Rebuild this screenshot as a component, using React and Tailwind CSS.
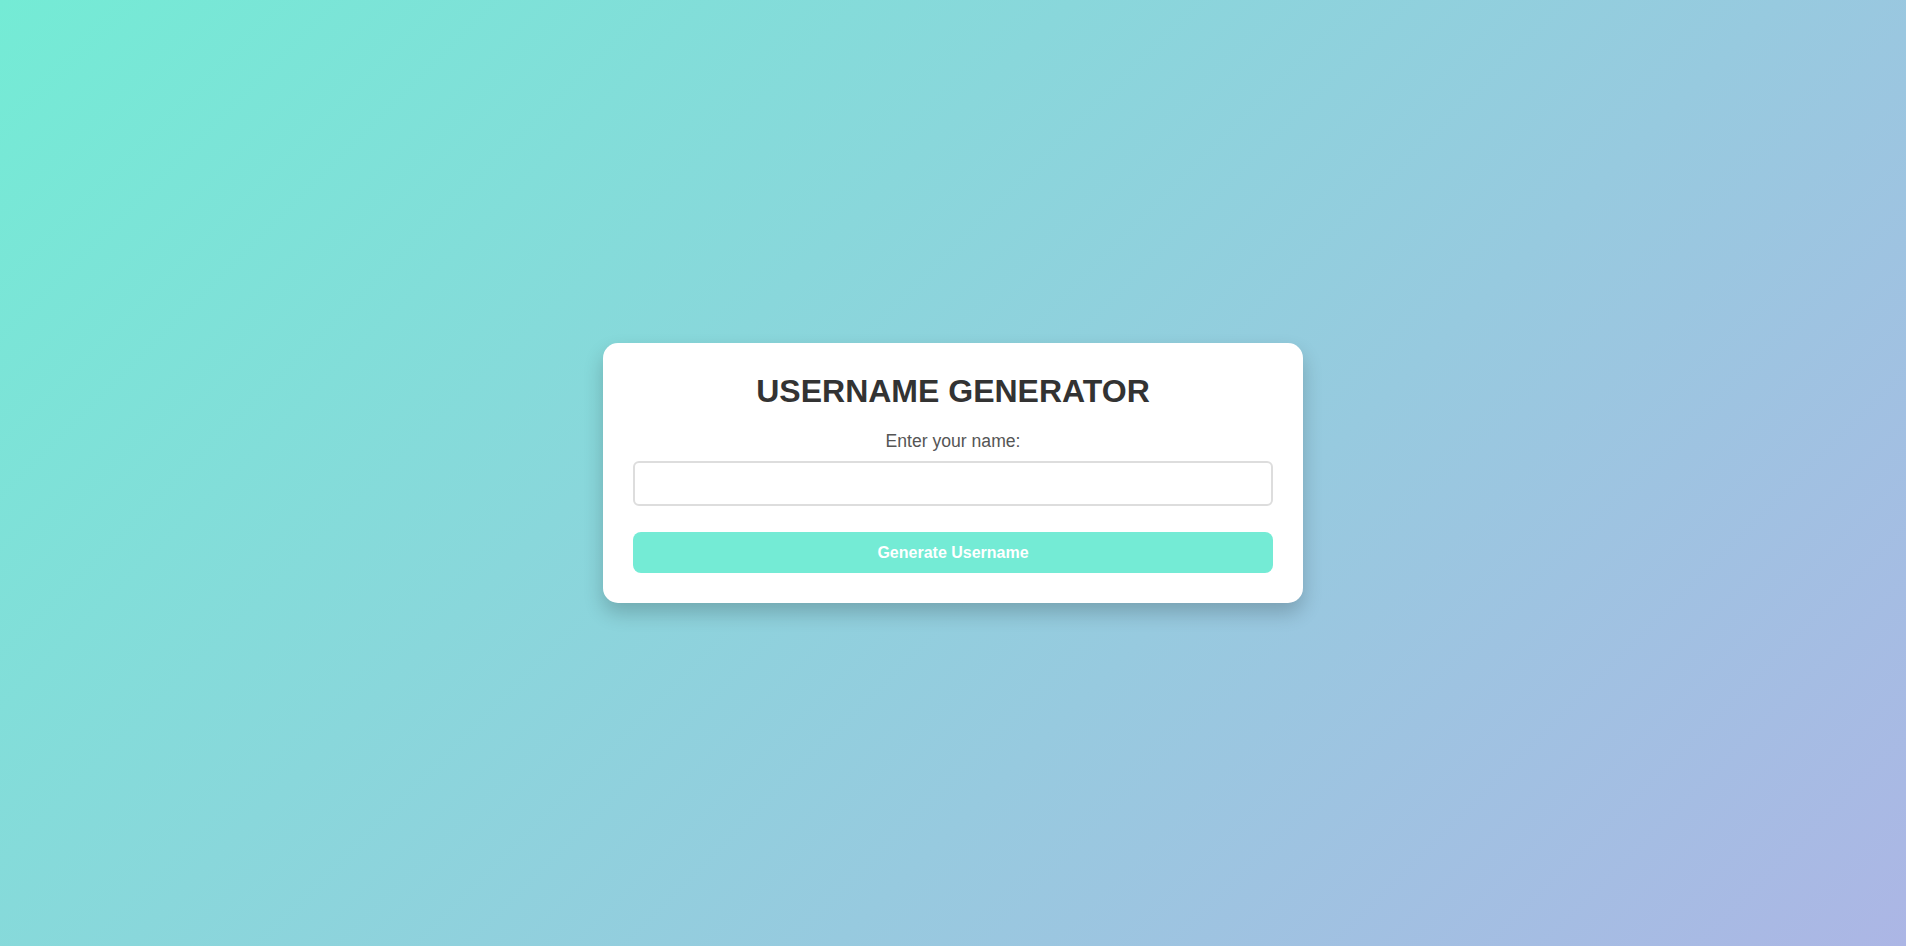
import React from "react";

export default function App() {
  return (
    <div
      className="min-h-screen w-full flex items-center justify-center bg-[linear-gradient(135deg,#74ebd5,#acb6e5)]"
      style={{ fontFamily: '"Liberation Sans", Arial, sans-serif' }}
    >
      <div className="w-[700px] bg-white rounded-[15px] px-[30px] pt-[30px] pb-[30px] shadow-[0_10px_20px_rgba(0,0,0,0.2)] text-center">
        <h1 className="text-[32px] leading-[37px] font-bold text-[#333] mb-[21px]">
          USERNAME GENERATOR
        </h1>
        <label className="block text-[17.6px] leading-[20px] text-[#555] mb-[10px]">
          Enter your name:
        </label>
        <input
          type="text"
          className="block w-full h-[45px] border-2 border-[#ddd] rounded-[6px] px-3 text-base outline-none mb-[26px]"
        />
        <button className="block w-full h-[41px] bg-[#74ebd5] text-white font-bold text-base rounded-[8px]">
          Generate Username
        </button>
      </div>
    </div>
  );
}
